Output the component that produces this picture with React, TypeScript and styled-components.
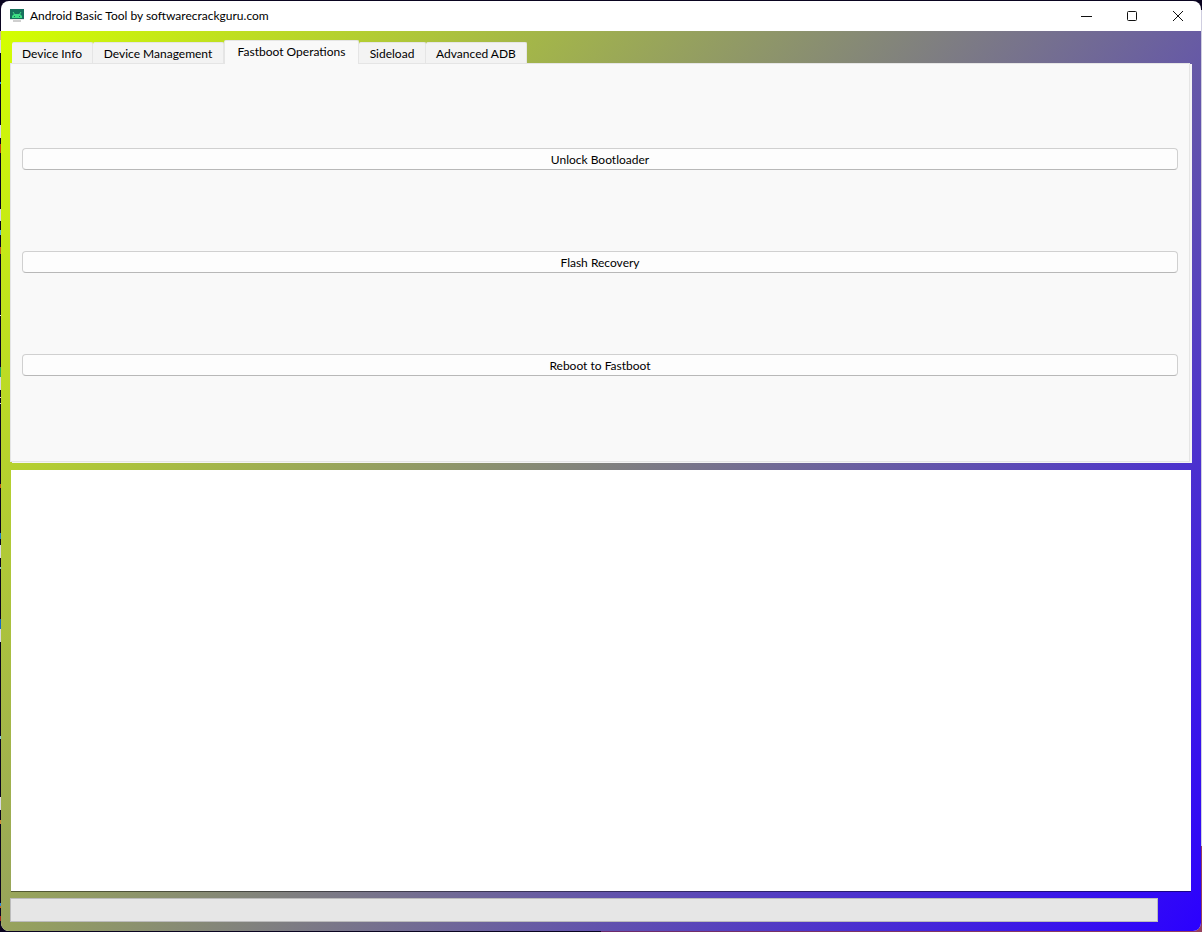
import React, { useState } from "react";
import styled, { createGlobalStyle } from "styled-components";

const GlobalStyle = createGlobalStyle`
  *, *::before, *::after { box-sizing: border-box; }
  body { margin: 0; background: #0a0420; }
  button { font: inherit; color: inherit; }
`;

/* A sliver of the desktop stays visible around the window. */
const Desktop = styled.div`
  min-height: 100vh;
  display: flex;
  padding: 1px;
  background:
    linear-gradient(
      #0a0420 31px, #cdb58c 31px 40px, #d9d9e4 40px 53px, #0a0420 53px 82px,
      #2a9be0 82px 84px, #0a0420 84px 125px, #d9d9e4 125px 138px, #0a0420 138px 144px,
      #c24a12 144px 153px, #0a0420 153px 209px, #d9d9e4 209px 221px, #0a0420 221px 230px,
      #59b8d8 230px 235px, #0a0420 235px 247px, #c2611c 247px 254px, #0a0420 254px 315px,
      #e6e6e6 315px 316px, #0a0420 316px 367px, #23a665 367px 377px, #d9d9e4 377px 390px,
      #0a0420 390px 397px, #d9d9e4 397px 398px, #0a0420 398px 403px, #d9d9e4 403px 404px,
      #0a0420 404px 484px, #c2611c 484px 488px, #0a0420 488px 533px, #1c7fc7 533px 539px,
      #0a0420 539px 545px, #d9d9e4 545px 558px, #0a0420 558px 567px, #7cc4d8 567px 569px,
      #0a0420 569px 619px, #1668c4 619px 629px, #d9d9e4 629px 642px, #0a0420 642px 736px,
      #7cc4d8 736px 739px, #0a0420 739px 797px, #d9d9e4 797px 810px, #0a0420 810px 820px,
      #d08a3a 820px 824px, #0a0420 824px 903px, #2a86d8 903px 906px, #c2611c 906px 908px,
      #0a0420 908px 916px, #a3281c 916px 921px, #0a0420 921px
    ) left / 8px 100% no-repeat,
    linear-gradient(#0a0420 10px, #cfcee0 10px 846px, #96405c 846px) right / 8px 100% no-repeat,
    linear-gradient(90deg, #0a0420 50%, #6b2a6b 50%, #96405c) bottom / 100% 8px no-repeat,
    #0a0420;
  font-family: Lato, "Open Sans", sans-serif;
  font-size: 12px;
  line-height: 16px;
  color: #000;
`;

const Window = styled.main`
  flex: 1;
  min-width: 0;
  display: flex;
  flex-direction: column;
  border-radius: 8px;
  overflow: hidden;
  background: #fff;
`;

const TitleBar = styled.header`
  height: 30px;
  flex: none;
  display: flex;
  align-items: center;
  padding-left: 8px;
`;

const Title = styled.h1`
  margin: 0 0 0 6px;
  flex: 1;
  font-size: 12px;
  font-weight: 400;
  white-space: nowrap;
`;

const CaptionButton = styled.button`
  width: 46px;
  height: 30px;
  padding: 0;
  border: 0;
  background: transparent;
  display: flex;
  align-items: center;
  justify-content: center;
`;

const Client = styled.div`
  flex: 1;
  display: flex;
  flex-direction: column;
  padding: 9px;
  background: linear-gradient(127deg, #d4ff00, #2b00ff);
`;

const TabBar = styled.div`
  height: 23px;
  display: flex;
  align-items: flex-start;
  padding-left: 2px;
`;

const Tab = styled.button<{ $active: boolean; $width: number }>`
  position: relative;
  z-index: ${(p) => (p.$active ? 1 : 0)};
  width: ${(p) => p.$width}px;
  height: ${(p) => (p.$active ? 24 : 21)}px;
  margin-top: ${(p) => (p.$active ? 0 : 2)}px;
  padding: ${(p) => (p.$active ? "0 0 1px" : "2px 0 0")};
  border: 1px solid #e5e5e5;
  border-left-width: ${(p) => (p.$active ? 1 : 0)}px;
  border-bottom: 0;
  border-radius: 2px 2px 0 0;
  background: ${(p) => (p.$active ? "#f9f9f9" : "#f3f3f3")};
  white-space: nowrap;
`;

const Panel = styled.section`
  flex: 399 0 0;
  display: flex;
  flex-direction: column;
  justify-content: space-evenly;
  padding: 3px 11px 4px;
  margin-right: 2px;
  border: 1px solid #e5e5e5;
  background: #f9f9f9;
  box-shadow: 2px 1px #f5f5f5;
`;

const Action = styled.button`
  height: 22px;
  padding: 2px 0 0;
  border: 1px solid #d0d0d0;
  border-bottom-color: #b8b8b8;
  border-radius: 4px;
  background: #fdfdfd;
`;

const Log = styled.textarea`
  flex: 422 0 0;
  margin: 8px 1px 6px;
  padding: 4px;
  border: 0;
  border-bottom: 1px solid rgba(0, 0, 0, 0.45);
  background-clip: padding-box;
  outline: 0;
  resize: none;
  background-color: #fff;
  font: inherit;
`;

const Progress = styled.div`
  height: 24px;
  margin-right: 34px;
  border: 1px solid #bcbcbc;
  background: #e6e6e6;
`;

const tabs = [
  { label: "Device Info", width: 81 },
  { label: "Device Management", width: 131 },
  { label: "Fastboot Operations", width: 135 },
  { label: "Sideload", width: 67 },
  { label: "Advanced ADB", width: 101 },
];

const actions = ["Unlock Bootloader", "Flash Recovery", "Reboot to Fastboot"];

const AppIcon = () => (
  <svg width="15" height="15" viewBox="0 0 15 15" aria-hidden="true">
    <rect x="1" y="0" width="14" height="10" fill="#17705c" />
    <path d="M3 9V7l2-2h6l2 2v2z" fill="#3ddc84" />
    <path d="M4 3l2 3M12 3l-2 3" stroke="#3ddc84" />
    <path d="M5 7h1v1H5zM10 7h1v1h-1z" fill="#17705c" />
    <path d="M1 10h14v1H1z" fill="#e4e4e4" />
    <path d="M4 11h8v2H4z" fill="#cfcfcf" />
  </svg>
);

export default function App() {
  const [active, setActive] = useState(2);
  return (
    <Desktop>
      <GlobalStyle />
      <Window>
        <TitleBar>
          <AppIcon />
          <Title>Android Basic Tool by softwarecrackguru.com</Title>
          <CaptionButton aria-label="Minimize">
            <svg width="12" height="12" fill="none" stroke="#111"><path d="M1 6.5h11" /></svg>
          </CaptionButton>
          <CaptionButton aria-label="Maximize">
            <svg width="12" height="12" fill="none" stroke="#111"><rect x="1.5" y="1.5" width="9" height="9" rx="1" /></svg>
          </CaptionButton>
          <CaptionButton aria-label="Close">
            <svg width="12" height="12" fill="none" stroke="#111"><path d="M1 1l10 10M11 1L1 11" /></svg>
          </CaptionButton>
        </TitleBar>
        <Client>
          <TabBar role="tablist">
            {tabs.map((t, i) => (
              <Tab key={t.label} role="tab" aria-selected={i === active} $active={i === active} $width={t.width} onClick={() => setActive(i)}>
                {t.label}
              </Tab>
            ))}
          </TabBar>
          <Panel role="tabpanel">
            {actions.map((a) => (
              <Action key={a}>{a}</Action>
            ))}
          </Panel>
          <Log aria-label="Output log" readOnly />
          <Progress role="progressbar" aria-label="Progress" aria-valuenow={0} />
        </Client>
      </Window>
    </Desktop>
  );
}
